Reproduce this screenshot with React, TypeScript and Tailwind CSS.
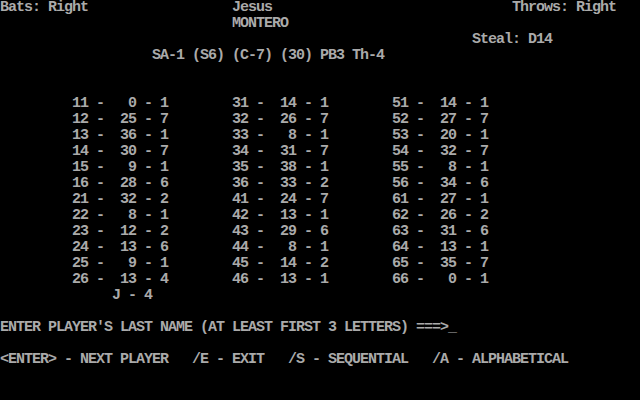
import React from "react";

const c1: [number, number, number][] = [
  [11, 0, 1], [12, 25, 7], [13, 36, 1], [14, 30, 7], [15, 9, 1], [16, 28, 6],
  [21, 32, 2], [22, 8, 1], [23, 12, 2], [24, 13, 6], [25, 9, 1], [26, 13, 4],
];
const c2: [number, number, number][] = [
  [31, 14, 1], [32, 26, 7], [33, 8, 1], [34, 31, 7], [35, 38, 1], [36, 33, 2],
  [41, 24, 7], [42, 13, 1], [43, 29, 6], [44, 8, 1], [45, 14, 2], [46, 13, 1],
];
const c3: [number, number, number][] = [
  [51, 14, 1], [52, 27, 7], [53, 20, 1], [54, 32, 7], [55, 8, 1], [56, 34, 6],
  [61, 27, 1], [62, 26, 2], [63, 31, 6], [64, 13, 1], [65, 35, 7], [66, 0, 1],
];

const fmt = (r: [number, number, number]) =>
  `${r[0]} - ${String(r[1]).padStart(3, " ")} - ${r[2]}`;

const sp = (n: number) => " ".repeat(n);

function buildLines(): string[] {
  const lines: string[] = [];
  lines.push("Bats: Right".padEnd(29) + "Jesus".padEnd(35) + "Throws: Right");
  lines.push(sp(29) + "MONTERO");
  lines.push(sp(59) + "Steal: D14");
  lines.push(sp(19) + "SA-1 (S6) (C-7) (30) PB3 Th-4");
  lines.push("");
  lines.push("");
  for (let i = 0; i < 12; i++) {
    lines.push(sp(9) + fmt(c1[i]).padEnd(20) + fmt(c2[i]).padEnd(20) + fmt(c3[i]));
  }
  lines.push(sp(14) + "J - 4");
  lines.push("");
  lines.push("ENTER PLAYER'S LAST NAME (AT LEAST FIRST 3 LETTERS) ===>_");
  lines.push("");
  lines.push("<ENTER> - NEXT PLAYER   /E - EXIT   /S - SEQUENTIAL   /A - ALPHABETICAL");
  lines.push("");
  lines.push("");
  return lines;
}

export default function App() {
  const lines = buildLines();
  return (
    <div className="w-[640px] h-[400px] bg-black overflow-hidden text-[#aaaaaa] font-['Liberation_Mono',monospace] font-bold text-[15px] tracking-[-1px]">
      {lines.map((l, i) => (
        <div key={i} className="h-4 leading-4 whitespace-pre">
          {l}
        </div>
      ))}
    </div>
  );
}
